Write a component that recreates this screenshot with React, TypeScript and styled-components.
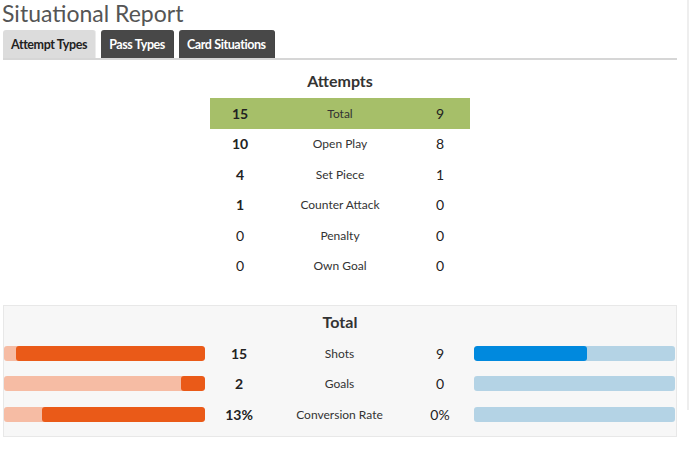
import React, { useState } from 'react';
import styled, { createGlobalStyle } from 'styled-components';

const GlobalStyle = createGlobalStyle`
	body {
		margin: 0;
		background: #fff;
		font-family: 'Lato', 'Liberation Sans', sans-serif;
		color: #333;
	}
`;

const Page = styled.div`
	display: flex;
	align-items: flex-start;
`;

const Main = styled.div`
	width: 674px;
	margin-left: 3px;
`;

const Side = styled.div`
	margin-left: 10px;
	width: 0;
	height: 410px;
	border-left: 2px solid #eeeeee;
`;

const Title = styled.h1`
	margin: 0 0 4px -1px;
	font-size: 23px;
	line-height: 26px;
	font-weight: 400;
	color: #555;
`;

const TabBar = styled.div`
	display: flex;
	gap: 5px;
	height: 28px;
	border-bottom: 2px solid #d6d6d6;
`;

const Tab = styled.button<{ $active?: boolean }>`
	height: 28px;
	padding: 0 8px;
	border: none;
	border-right: 1px solid ${(p) => (p.$active ? '#ececec' : '#444')};
	border-radius: 3px 3px 0 0;
	background: ${(p) => (p.$active ? '#dcdcdc' : '#484848')};
	color: ${(p) => (p.$active ? '#222' : '#fff')};
	font-family: 'Lato', 'Liberation Sans', sans-serif;
	font-size: 12.5px;
	font-weight: 700;
	letter-spacing: -0.4px;
	cursor: pointer;
`;

const Section = styled.div`
	display: flex;
	flex-direction: column;
	align-items: center;
`;

const Heading = styled.h2`
	margin: 0;
	font-size: 16px;
	line-height: 20px;
	font-weight: 700;
	color: #333;
	text-align: center;
`;

const AttemptsHeading = styled(Heading)`
	margin: 11px 0 7px;
`;

const Table = styled.div`
	width: 260px;
`;

const Row = styled.div<{ $highlight?: boolean }>`
	display: grid;
	grid-template-columns: 60px 140px 60px;
	align-items: center;
	height: 30.5px;
	background: ${(p) => (p.$highlight ? '#a6bf69' : 'transparent')};
	text-align: center;
`;

const Num = styled.span<{ $bold?: boolean }>`
	font-size: 14px;
	font-weight: ${(p) => (p.$bold ? 700 : 400)};
	color: #222;
`;

const Label = styled.span`
	font-size: 12px;
	color: #333;
`;

const Panel = styled.div`
	margin-top: 24px;
	padding: 6px 0 6px;
	background: #f7f7f7;
	border: 1px solid #e8e8e8;
`;

const PanelHeading = styled(Heading)`
	margin-bottom: 6px;
`;

const BarRow = styled.div`
	display: grid;
	grid-template-columns: 201px 68px 133px 68px 201px;
	align-items: center;
	height: 30.5px;
	text-align: center;
`;

const Track = styled.div<{ $side: 'home' | 'away' }>`
	display: flex;
	justify-content: ${(p) => (p.$side === 'home' ? 'flex-end' : 'flex-start')};
	height: 15px;
	border-radius: 3px;
	overflow: hidden;
	background: ${(p) => (p.$side === 'home' ? '#f6bca4' : '#b4d3e5')};
`;

const Fill = styled.div<{ $side: 'home' | 'away' }>`
	height: 100%;
	border-radius: 3px;
	background: ${(p) => (p.$side === 'home' ? '#ea5a18' : '#0089de')};
`;

const attempts = [
	{ label: 'Total', home: '15', away: '9', homeBold: true, highlight: true },
	{ label: 'Open Play', home: '10', away: '8', homeBold: true },
	{ label: 'Set Piece', home: '4', away: '1', homeBold: true },
	{ label: 'Counter Attack', home: '1', away: '0', homeBold: true },
	{ label: 'Penalty', home: '0', away: '0' },
	{ label: 'Own Goal', home: '0', away: '0' },
];

const totals = [
	{ label: 'Shots', home: '15', away: '9', homePct: 94, awayPct: 56 },
	{ label: 'Goals', home: '2', away: '0', homePct: 12, awayPct: 0 },
	{ label: 'Conversion Rate', home: '13%', away: '0%', homePct: 81, awayPct: 0 },
];

const tabs = ['Attempt Types', 'Pass Types', 'Card Situations'];

function App() {
	const [active, setActive] = useState(0);
	return (
		<Page>
			<GlobalStyle />
			<Main>
				<Title>Situational Report</Title>
				<TabBar>
					{tabs.map((t, i) => (
						<Tab key={t} $active={i === active} onClick={() => setActive(i)}>
							{t}
						</Tab>
					))}
				</TabBar>
				<Section>
					<AttemptsHeading>Attempts</AttemptsHeading>
					<Table>
						{attempts.map((a) => (
							<Row key={a.label} $highlight={a.highlight}>
								<Num $bold={a.homeBold}>{a.home}</Num>
								<Label>{a.label}</Label>
								<Num>{a.away}</Num>
							</Row>
						))}
					</Table>
				</Section>
				<Panel>
					<PanelHeading>Total</PanelHeading>
					{totals.map((t) => (
						<BarRow key={t.label}>
							<Track $side="home">
								<Fill $side="home" style={{ width: `${t.homePct}%` }} />
							</Track>
							<Num $bold>{t.home}</Num>
							<Label>{t.label}</Label>
							<Num>{t.away}</Num>
							<Track $side="away">
								<Fill $side="away" style={{ width: `${t.awayPct}%` }} />
							</Track>
						</BarRow>
					))}
				</Panel>
			</Main>
			<Side />
		</Page>
	);
}

export default App;
